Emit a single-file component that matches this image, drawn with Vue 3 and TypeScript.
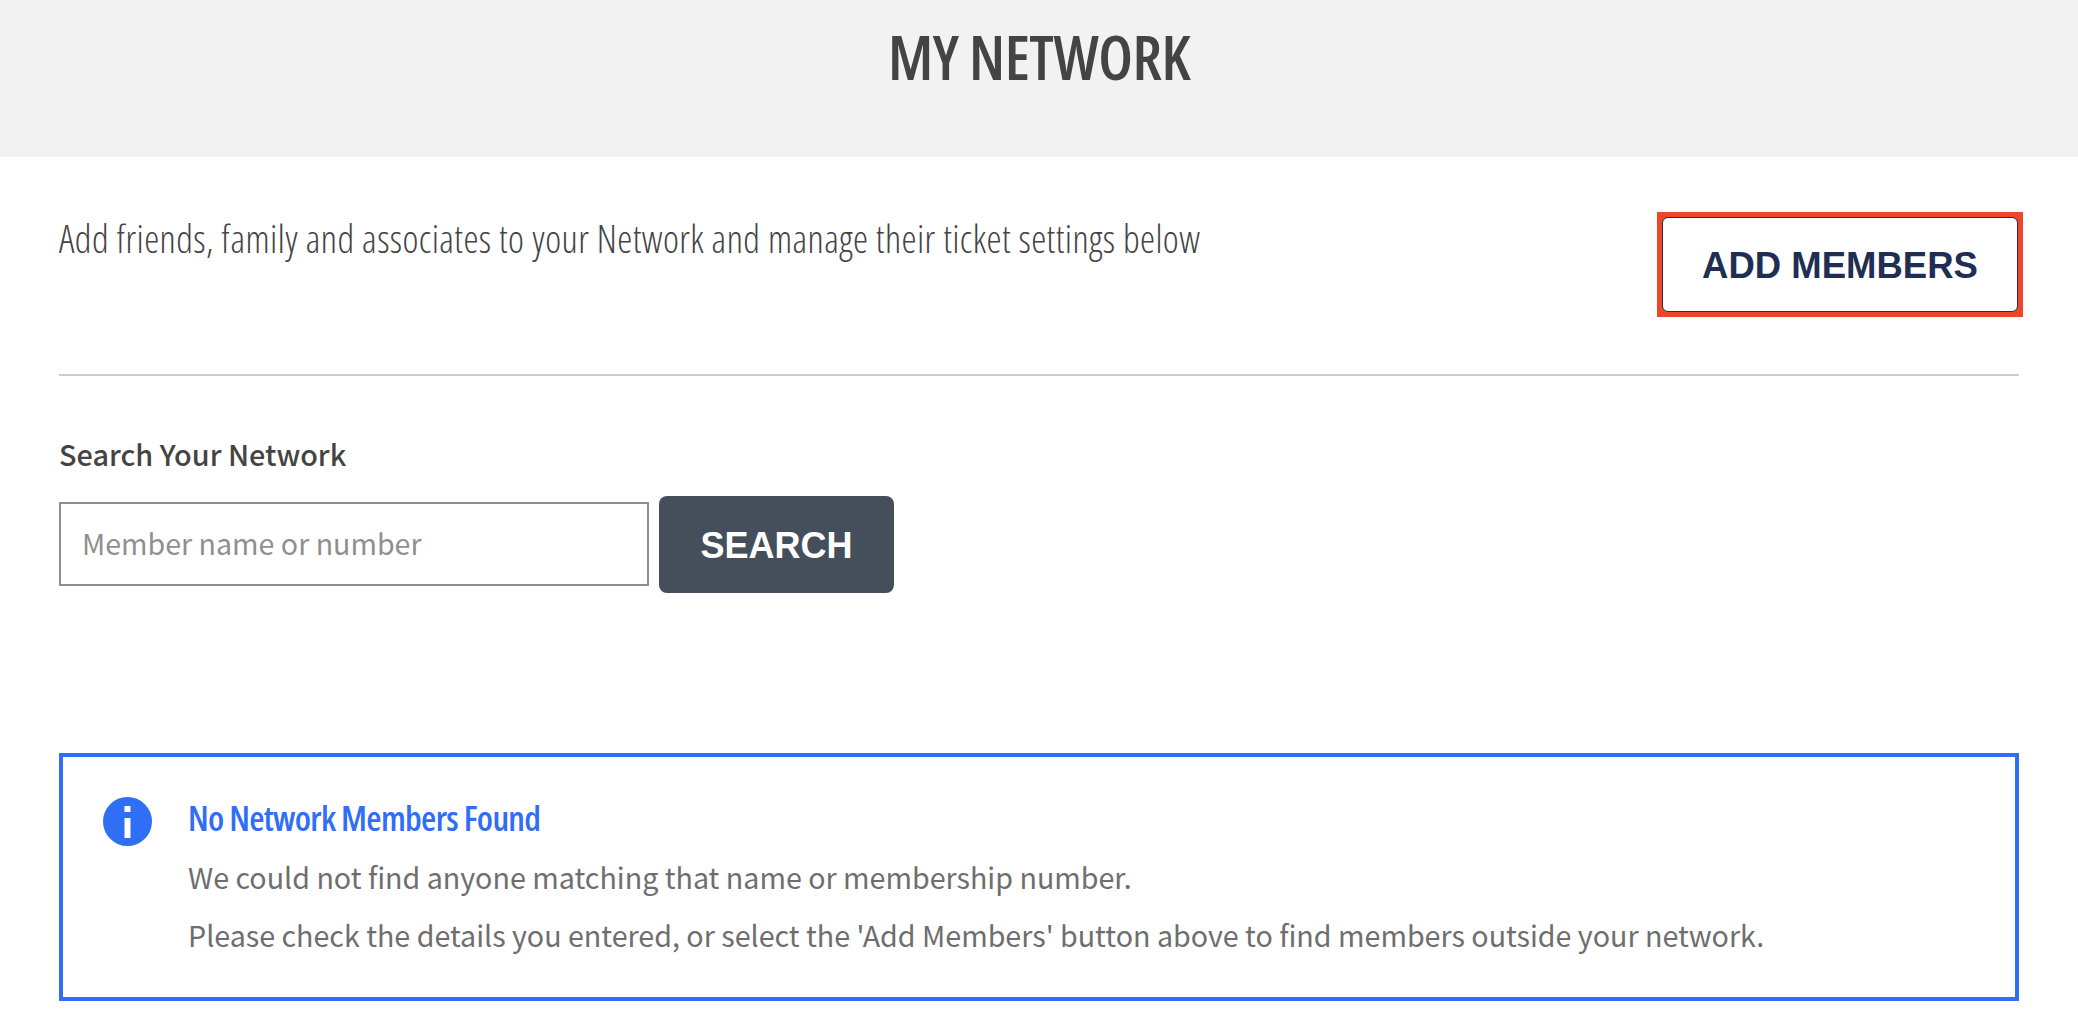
<script setup lang="ts">
const placeholder = "Member name or number";
const lines: string[] = [
  "We could not find anyone matching that name or membership number.",
  "Please check the details you entered, or select the 'Add Members' button above to find members outside your network.",
];
</script>

<template>
  <div class="page">
    <header class="banner">
      <h1>MY NETWORK</h1>
    </header>
    <main class="content">
      <section class="intro">
        <p>Add friends, family and associates to your Network and manage their ticket settings below</p>
        <div class="add-frame">
          <button class="add-btn" type="button"><span>ADD MEMBERS</span></button>
        </div>
      </section>
      <hr />
      <form class="search" @submit.prevent>
        <label for="member-search">Search Your Network</label>
        <div class="search-row">
          <input id="member-search" type="text" :placeholder="placeholder" />
          <button class="search-btn" type="submit">SEARCH</button>
        </div>
      </form>
      <section class="alert">
        <svg class="alert-icon" viewBox="0 0 49 49" aria-hidden="true">
          <circle cx="24.5" cy="24.5" r="24.5" fill="#306ef6" />
          <rect x="21.5" y="9" width="6" height="6" fill="#fff" />
          <rect x="21.5" y="21" width="6" height="20" fill="#fff" />
        </svg>
        <div class="alert-body">
          <h2>No Network Members Found</h2>
          <p v-for="l in lines" :key="l">{{ l }}</p>
        </div>
      </section>
    </main>
  </div>
</template>

<style scoped>
.page {
  width: 2078px;
  height: 1022px;
  overflow: hidden;
  background: #fff;
  font-family: "Noto Sans CJK SC", "Noto Sans", sans-serif;
  color: #444;
}
.banner {
  height: 157px;
  background: #f2f2f2;
  display: flex;
  justify-content: center;
}
h1 {
  margin: 21px 0 0;
  font-family: "Open Sans", sans-serif;
  font-stretch: 75%;
  font-size: 61px;
  line-height: 72px;
  font-weight: 600;
  letter-spacing: -0.5px;
  color: #444;
}
.content {
  padding: 0 59px;
}
.intro {
  display: flex;
  justify-content: space-between;
  align-items: flex-start;
  height: 217px;
}
.intro p {
  margin: 59px 0 0;
  font-family: "Open Sans", sans-serif;
  font-stretch: 75%;
  font-size: 38px;
  line-height: 44px;
  font-weight: 300;
  letter-spacing: 0.43px;
  white-space: nowrap;
}
.add-frame {
  margin-top: 55px;
  margin-right: -4px;
  padding: 5px;
  background: #ee4628;
  display: flex;
}
.add-btn {
  width: 356px;
  height: 95px;
  padding: 2px 0 0;
  background: #fff;
  border: 1px solid #212e54;
  border-radius: 6px;
  font-family: "Liberation Sans", Arial, sans-serif;
  font-weight: 700;
  font-size: 36.5px;
  color: #212e54;
}
hr {
  margin: 0;
  border: 0;
  height: 2px;
  background: #ccc;
}
.search {
  margin-top: 56px;
}
label {
  display: block;
  font-size: 28.8px;
  line-height: 44px;
  font-weight: 500;
}
.search-row {
  display: flex;
  align-items: flex-start;
  gap: 10px;
  margin-top: 20px;
}
input {
  box-sizing: border-box;
  width: 590px;
  height: 84px;
  margin-top: 6px;
  padding: 0 21px 4px;
  border: 2px solid #8f8f8f;
  border-radius: 0;
  font-family: inherit;
  font-size: 28.6px;
  outline: 0;
}
input::placeholder {
  color: #8f8f8f;
}
.search-btn {
  width: 235px;
  height: 97px;
  padding: 2px 0 0;
  background: #454f5c;
  border: 0;
  border-radius: 8px;
  font-family: "Liberation Sans", Arial, sans-serif;
  font-weight: 700;
  font-size: 36px;
  color: #fff;
}
.alert {
  box-sizing: border-box;
  display: flex;
  margin-top: 160px;
  height: 248px;
  border: 4px solid #306ef6;
  padding: 40px 40px 0;
  gap: 36px;
}
.alert-icon {
  width: 49px;
  height: 49px;
  flex: none;
}
h2 {
  margin: -3px 0 6px;
  font-family: "Open Sans", sans-serif;
  font-stretch: 75%;
  font-size: 35px;
  line-height: 48px;
  font-weight: 600;
  letter-spacing: -0.7px;
  color: #306ef6;
}
.alert-body p {
  margin: 0;
  font-size: 28.65px;
  line-height: 57.5px;
  color: #6e6e6e;
}
</style>

<style>
body {
  background: #fff;
}
</style>
